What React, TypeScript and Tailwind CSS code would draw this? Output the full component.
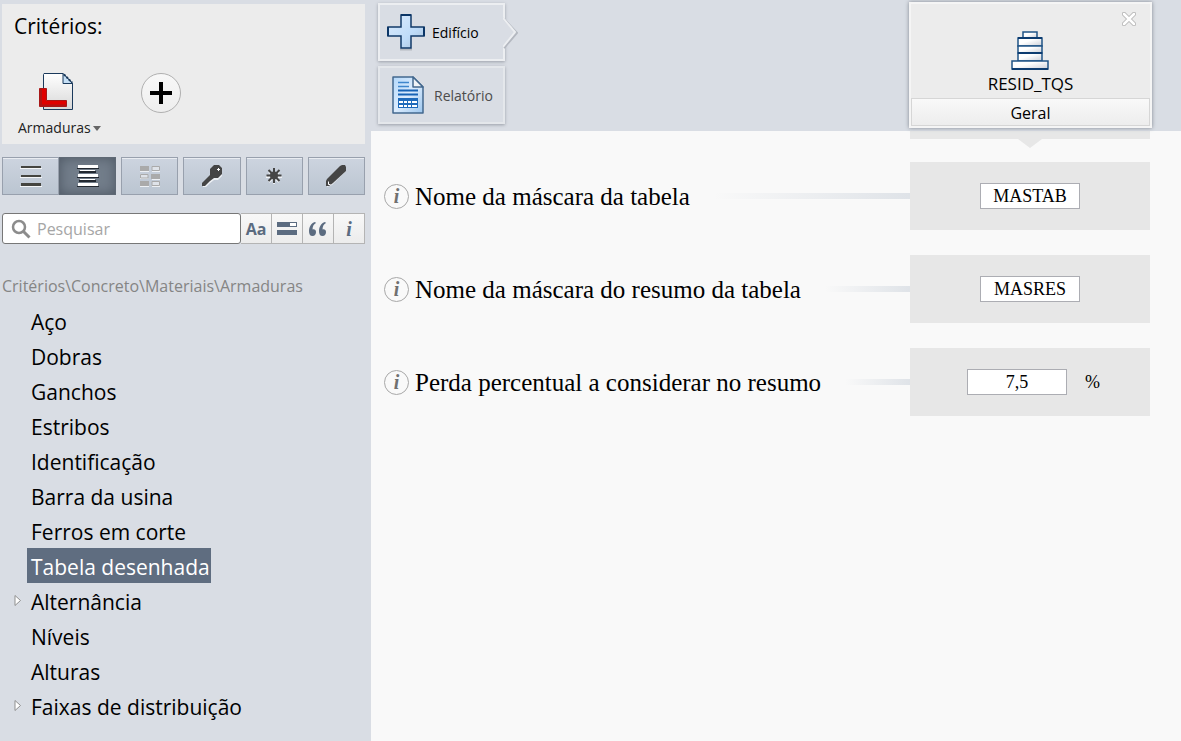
/**
 * Editor de critérios
 * - Barra lateral: critério atual, modos de exibição, pesquisa e árvore
 * - Área principal: abas, cartão do edifício e campos
 */
import { useId, useState } from 'react';
import type { ReactNode } from 'react';

const TREE = [
  { label: 'Aço' },
  { label: 'Dobras' },
  { label: 'Ganchos' },
  { label: 'Estribos' },
  { label: 'Identificação' },
  { label: 'Barra da usina' },
  { label: 'Ferros em corte' },
  { label: 'Tabela desenhada' },
  { label: 'Alternância', expandable: true },
  { label: 'Níveis' },
  { label: 'Alturas' },
  { label: 'Faixas de distribuição', expandable: true },
];

const FIELDS = [
  { label: 'Nome da máscara da tabela', value: 'MASTAB' },
  { label: 'Nome da máscara do resumo da tabela', value: 'MASRES' },
  { label: 'Perda percentual a considerar no resumo', value: '7,5', unit: '%' },
];

function DocumentIcon() {
  return (
    <svg width="36" height="40" viewBox="0 0 36 40" aria-hidden="true">
      <defs>
        <linearGradient id="doc" x1="0" y1="0" x2="0" y2="1">
          <stop offset="0" stopColor="#fff" />
          <stop offset="1" stopColor="#d8d8d8" />
        </linearGradient>
      </defs>
      <path d="M5 1.500h19l9.500 9.500v26.500h-29v-35z" fill="url(#doc)" stroke="#1b3a5c" strokeLinejoin="round" />
      <path d="M24 1.500v10h9.500z" fill="#c5dff5" stroke="#1b3a5c" strokeLinejoin="round" />
      <path d="M25 2.500l8 8" stroke="#1b3a5c" strokeWidth="2" strokeDasharray="2 1.500" />
      <path d="M.5 16.500h7v12h20v6H.5z" fill="#e00000" stroke="#a81818" />
      <path d="M2 17v16.500h25" fill="none" stroke="#b01414" strokeWidth="2" />
    </svg>
  );
}

function LinesIcon() {
  return (
    <svg width="22" height="24" viewBox="0 0 22 24" aria-hidden="true">
      <path d="M0 4h22v1H0zM0 13h22v1H0zM0 22h22v1H0z" fill="#f4f6f8" />
      <path d="M1 2h20v2H1zM1 11h20v2H1zM1 19h20v3H1z" fill="#454540" />
    </svg>
  );
}

function CenterLinesIcon() {
  return (
    <svg width="22" height="24" viewBox="0 0 22 24" aria-hidden="true">
      <path d="M0 4h22v1H0zM2 7h17v2H2zM0 13h22v1H0zM2 16h17v2H2zM0 22h22v1H0z" fill="#222830" />
      <path d="M1 1h20v3H1zM3 6h15v1H3zM1 10h20v3H1zM3 15h15v1H3zM1 19h20v3H1z" fill="#fff" />
    </svg>
  );
}

function GridIcon() {
  return (
    <svg width="22" height="24" viewBox="0 0 22 24" aria-hidden="true">
      <path d="M1 3h9v5H1zM13 3h8v5h-8zM1 10h8v5H1zM13 10h8v6h-8zM1 18h9v5H1zM13 18h8v5h-8z" fill="#edf0f4" />
      <path d="M1 2h9v5H1zM12 10h9v5h-9zM1 17h9v5H1z" fill="#aaa" />
      <path d="M13 2.500h7.500v4H13zM1.500 10.500H9v3.500H1.500zM13 17.500h7.500v4H13z" fill="#dfe3e9" stroke="#aaa" />
    </svg>
  );
}

function KeyIcon() {
  return (
    <svg width="24" height="24" viewBox="0 0 24 24" aria-hidden="true">
      <path d="M12 5l3-2h5l2 2v7l-4 4h-4l-4 3-4 4H3v-3l7-7z" fill="#eef1f5" />
      <path d="M10 5l4-4h5l3 3v6l-4 4h-4l-4 3-4 4-1 1H2v-3l8-8z" fill="#454545" />
      <path d="M17 5.500h3M18.500 4v3" stroke="#fff" />
    </svg>
  );
}

function AsteriskIcon() {
  return (
    <svg width="22" height="24" viewBox="0 0 22 24" aria-hidden="true">
      <path d="M11 5v15M3 13h16M6 8l10 10M16 8L6 18" stroke="#eef1f5" strokeWidth="2" />
      <path d="M11 4v15M3.500 11.500h15M5.500 6l11 11M16.500 6l-11 11" stroke="#454545" strokeWidth="2" />
      <circle cx="11" cy="11.500" r="4" fill="#454545" />
    </svg>
  );
}

function PencilIcon() {
  return (
    <svg width="24" height="24" viewBox="0 0 24 24" aria-hidden="true">
      <path d="M3 18L17 4l4-1 1 4L8 21l-5 2z" fill="#eef1f5" />
      <path d="M3 15L16 2l2-1h3l1 2v4L9 19l-4 3H2v-5z" fill="#454545" />
      <path d="M4.500 17.500v3h2" fill="none" stroke="#fff" />
    </svg>
  );
}

function PlusIcon() {
  return (
    <svg width="40" height="38" viewBox="0 0 40 38" aria-hidden="true">
      <defs>
        <linearGradient id="plus" x1="0" y1="0" x2="1" y2="1">
          <stop offset="0" stopColor="#dcebfc" />
          <stop offset=".6" stopColor="#bfdcf9" />
          <stop offset="1" stopColor="#a9bfd6" />
        </linearGradient>
      </defs>
      <path d="M14 36.500h12" stroke="#b5b9c0" strokeWidth="2" />
      <path d="M15 2h10v12h13v9H25v12H15V23H2v-9h13z" fill="url(#plus)" stroke="#123a68" strokeWidth="1.500" />
      <path d="M15 2h10M2 14v9M38 14v9" stroke="#0b3566" strokeWidth="2" />
    </svg>
  );
}

function ReportIcon() {
  return (
    <svg width="32" height="39" viewBox="0 0 32 39" aria-hidden="true">
      <defs>
        <linearGradient id="report" x1="0" y1="0" x2="1" y2="1">
          <stop offset="0" stopColor="#b4d8fb" />
          <stop offset=".5" stopColor="#dcecfd" />
          <stop offset="1" stopColor="#9cc6ee" />
        </linearGradient>
      </defs>
      <path d="M1 1h20l10 10v26H1z" fill="url(#report)" stroke="#43688e" strokeWidth="1.500" strokeLinejoin="round" />
      <path d="M21 1v10h10z" fill="#f0f3f6" stroke="#43688e" strokeWidth="1.500" strokeLinejoin="round" />
      <path d="M6 6.500h11M6 10.500h11" stroke="#3f86cc" strokeWidth="1.500" />
      <path d="M6 14.500h20M6 18.500h20" stroke="#1763b5" strokeWidth="2" />
      <path d="M6 22h20v10H6z" fill="#1e6abb" />
      <path d="M7 25h4v2H7zM12 25h3v2h-3zM16 25h3v2h-3zM20 25h5v2h-5zM7 29h4v2H7zM12 29h3v2h-3zM16 29h3v2h-3zM20 29h5v2h-5z" fill="#fff" />
    </svg>
  );
}

function BuildingIcon() {
  return (
    <svg width="38" height="40" viewBox="0 0 38 40" aria-hidden="true">
      <defs>
        <linearGradient id="floor" x1="0" y1="0" x2="1" y2="1">
          <stop offset=".4" stopColor="#fff" />
          <stop offset="1" stopColor="#cbcfd8" />
        </linearGradient>
      </defs>
      <g fill="url(#floor)" stroke="#205486" strokeWidth="1.500">
        <path d="M12 2h14v6H12z" />
        <path d="M7 8h24v8H7z" />
        <path d="M7 16h24v7H7z" />
        <path d="M7 23h24v8H7z" />
        <path d="M1 31h36v8H1z" />
      </g>
      <path d="M7 8h24M7 23h24M1 39h36" stroke="#0d3c70" strokeWidth="2" />
    </svg>
  );
}

function ModeButton({ label, active, children }: { label: string; active?: boolean; children: ReactNode }) {
  return (
    <button
      type="button"
      aria-label={label}
      aria-pressed={active}
      className={
        active
          ? 'flex h-[38px] flex-1 items-center justify-center border border-[#5f6975] bg-[#727d8a] shadow-[inset_0_0_12px_#4f5965]'
          : 'flex h-[38px] flex-1 items-center justify-center border border-[#98a0ad] bg-linear-to-b from-[#cdd4df] to-[#bbc5d1] shadow-[inset_0_1px_0_#e9ecf1]'
      }
    >
      {children}
    </button>
  );
}

function FilterButton({ label, children }: { label: string; children: ReactNode }) {
  return (
    <button
      type="button"
      aria-label={label}
      className="flex w-[31px] items-center justify-center border-y border-r border-[#b4b4b4] bg-linear-to-b from-[#f8f8f8] to-[#ececec] text-[#5b6b80]"
    >
      {children}
    </button>
  );
}

function Sidebar() {
  const [selected, setSelected] = useState('Tabela desenhada');
  const [query, setQuery] = useState('');

  return (
    <aside className="w-[371px] shrink-0 bg-[#d9dde4] pt-1 pr-1.5 pl-0.5">
      <section className="h-[140px] bg-[#ececec] px-3">
        <h1 className="pt-1.5 text-[21px] leading-8">Critérios:</h1>
        <div className="flex items-start gap-10 pt-[30px]">
          <button type="button" className="flex flex-col items-center text-[14px] leading-5 text-[#222]">
            <DocumentIcon />
            <span className="flex items-center gap-0.5 pt-1.5 pl-1">
              Armaduras
              <svg width="8" height="5" viewBox="0 0 8 5" aria-hidden="true">
                <path d="M0 0h8L4 5z" fill="#666" />
              </svg>
            </span>
          </button>
          <button
            type="button"
            aria-label="Adicionar"
            className="mt-px flex size-10 items-center justify-center rounded-full border border-[#b0b0b0] bg-linear-to-b from-[#f8f8f8] to-[#eee]"
          >
            <svg width="24" height="24" viewBox="0 0 24 24" aria-hidden="true">
              <path d="M12 1v22M1 12h22" stroke="#000" strokeWidth="4" />
            </svg>
          </button>
        </div>
      </section>

      <div className="mt-[13px] flex gap-[5px]">
        <div className="flex w-[114px]">
          <ModeButton label="Lista"><LinesIcon /></ModeButton>
          <ModeButton label="Lista centralizada" active><CenterLinesIcon /></ModeButton>
        </div>
        <ModeButton label="Grade"><GridIcon /></ModeButton>
        <ModeButton label="Chave"><KeyIcon /></ModeButton>
        <ModeButton label="Alterados"><AsteriskIcon /></ModeButton>
        <ModeButton label="Editar"><PencilIcon /></ModeButton>
      </div>

      <div className="mt-[18px] flex h-[31px]">
        <label className="flex min-w-0 flex-1 items-center gap-1.5 rounded-[3px] border border-[#777] bg-white pl-2">
          <svg width="20" height="20" viewBox="0 0 20 20" className="shrink-0" aria-hidden="true">
            <circle cx="8" cy="8" r="6" fill="none" stroke="#8c8c8c" strokeWidth="2.500" />
            <path d="M12.500 12.500l6 6" stroke="#8c8c8c" strokeWidth="3" />
          </svg>
          <input
            type="text"
            aria-label="Pesquisar"
            placeholder="Pesquisar"
            value={query}
            onChange={(e) => setQuery(e.target.value)}
            className="w-full min-w-0 text-[16px] leading-6 outline-none placeholder:text-[#a6a6a6]"
          />
        </label>
        <FilterButton label="Diferenciar maiúsculas">
          <span className="text-[16px] font-bold">Aa</span>
        </FilterButton>
        <FilterButton label="Campos">
          <svg width="20" height="13" viewBox="0 0 20 13" aria-hidden="true">
            <path d="M0 0h20v5H0zM0 8h20v5H0z" fill="currentColor" />
            <path d="M13 1h6v3h-6z" fill="#fff" />
          </svg>
        </FilterButton>
        <FilterButton label="Frase exata">
          <svg width="18" height="14" viewBox="0 0 18 14" aria-hidden="true">
            <g fill="currentColor">
              <path d="M6 0C2 1 0 5 0 9c0 3 1 5 3.500 5S7 12 7 10 5.500 7 3.500 7.500C3.500 4 5 2 7 1z" />
              <path d="M16 0c-4 1-6 5-6 9 0 3 1 5 3.500 5s3.500-2 3.500-4-1.500-3-3.500-2.500c0-3.500 1.500-5.500 3.500-6.500z" />
            </g>
          </svg>
        </FilterButton>
        <FilterButton label="Informações">
          <span className="font-['Liberation_Serif',serif] text-[20px] font-bold italic">i</span>
        </FilterButton>
      </div>

      <p className="mt-[30px] text-[16px] leading-6 text-[#858585]">Critérios\Concreto\Materiais\Armaduras</p>

      <ul className="mt-[5px]">
        {TREE.map((item) => (
          <li key={item.label} className="flex h-[35px] items-center">
            <span className="w-[25px] pl-3">
              {item.expandable && (
                <svg width="8" height="11" viewBox="0 0 8 11" aria-hidden="true">
                  <path d="M1 .5v10L6.500 5.500z" fill="#fff" stroke="#8f8f8f" />
                </svg>
              )}
            </span>
            <button
              type="button"
              onClick={() => setSelected(item.label)}
              className={
                item.label === selected
                  ? 'h-full bg-[#5f6d80] pt-0.5 pr-px pl-1 text-[21px] leading-8 text-white'
                  : 'h-full pt-0.5 pr-px pl-1 text-[21px] leading-8'
              }
            >
              {item.label}
            </button>
          </li>
        ))}
      </ul>
    </aside>
  );
}

function Tabs() {
  return (
    <nav className="flex flex-col gap-[5px] pt-[3px] pl-[7px]">
      <a href="#edificio" className="relative flex h-[58px] w-[127px] items-center gap-1.5 border-2 border-[#eceef1] pl-1.5 text-[14px] shadow-[0_1px_3px_#9a9fa8]">
        <PlusIcon />
        Edifício
        <svg width="15" height="32" viewBox="0 0 15 32" className="absolute top-3 -right-[15px]" aria-hidden="true">
          <path d="M-3 0h3l13 15L0 30h-3z" fill="#d9dde4" />
          <path d="M1 2l13 14L1 31" fill="none" stroke="#b4b8c0" strokeWidth="2" />
          <path d="M0 1l12 14L0 30" fill="none" stroke="#eceef1" strokeWidth="2" />
        </svg>
      </a>
      <a href="#relatorio" className="flex h-[58px] w-[127px] items-center gap-2.5 border-2 border-[#e4e7eb] pl-3 text-[14px] text-[#4c4c4c] shadow-[0_1px_3px_#9a9fa8]">
        <ReportIcon />
        Relatório
      </a>
    </nav>
  );
}

function BuildingCard() {
  return (
    <section className="relative mt-0.5 mr-[29px] flex h-[126px] w-[243px] flex-col items-center border-2 border-[#f5f5f5] bg-[#ececec] shadow-[0_0_4px_#7f8690]">
      <button type="button" aria-label="Fechar" className="absolute top-2 right-3.5">
        <svg width="14" height="14" viewBox="0 0 14 14" aria-hidden="true">
          <path d="M2 2l10 10M12 2L2 12" stroke="#b9b9b9" strokeWidth="4.500" strokeLinecap="round" />
          <path d="M2 2l10 10M12 2L2 12" stroke="#fff" strokeWidth="2.500" strokeLinecap="round" />
        </svg>
      </button>
      <div className="flex flex-1 flex-col items-center justify-end gap-0.5">
        <BuildingIcon />
        <h2 className="pb-0.5 text-[17px] leading-6">RESID_TQS</h2>
      </div>
      <p className="h-[28px] w-full border border-[#d6d6d6] bg-linear-to-b from-[#f9f9f9] to-[#ededed] text-center text-[16px] leading-7">
        Geral
      </p>
    </section>
  );
}

function FieldRow({ label, value, unit }: { label: string; value: string; unit?: string }) {
  const id = useId();
  const [text, setText] = useState(value);

  return (
    <div className="flex h-[68px] items-center font-['Liberation_Serif',serif]">
      <button
        type="button"
        aria-label={`Informações: ${label}`}
        className="flex size-[25px] shrink-0 items-center justify-center rounded-full border border-[#a8a8a8] text-[20px] leading-5 font-bold text-[#707070] italic"
      >
        i
      </button>
      <label htmlFor={id} className="pt-0.5 pl-1.5 text-[25px] leading-8 whitespace-nowrap">
        {label}
      </label>
      <span className="ml-6 h-[6px] flex-1 bg-linear-to-r from-[#f9f9f9] to-[#dfe3e8]" />
      <div className="flex h-full w-[240px] items-center justify-center bg-[#e7e7e7]">
        <input
          id={id}
          type="text"
          value={text}
          onChange={(e) => setText(e.target.value)}
          className="h-[26px] w-[100px] border border-[#acadb3] bg-white text-center text-[18px] outline-none"
        />
        {unit && <span className="w-[26px] pl-[18px] text-[18px]">{unit}</span>}
      </div>
    </div>
  );
}

export default function App() {
  return (
    <div className="flex min-h-screen bg-[#f9f9f9] font-['Open_Sans',sans-serif] text-black">
      <Sidebar />
      <main className="min-w-0 flex-1">
        <header className="flex h-[131px] items-start justify-between bg-[#d9dde4]">
          <Tabs />
          <BuildingCard />
        </header>
        <div className="pr-[31px] pl-[13px]">
          <div className="ml-auto flex w-[240px] flex-col items-center">
            <div className="h-2 w-full bg-[#e7e7e7]" />
            <svg width="24" height="9" viewBox="0 0 24 9" aria-hidden="true">
              <path d="M0 0h24L12 9z" fill="#e7e7e7" />
            </svg>
          </div>
          <form className="flex flex-col gap-[25px] pt-3.5">
            {FIELDS.map((field) => (
              <FieldRow key={field.label} {...field} />
            ))}
          </form>
        </div>
      </main>
    </div>
  );
}
